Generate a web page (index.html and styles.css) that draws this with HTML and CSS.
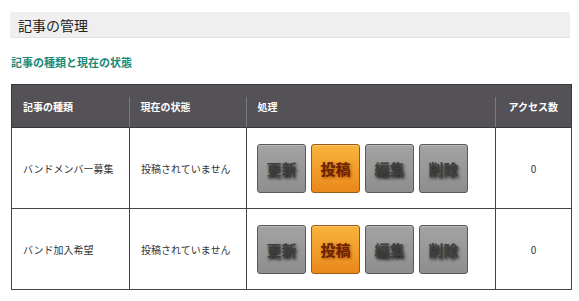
FILE: index.html
```html
<!DOCTYPE html>
<html lang="ja">
<head>
<meta charset="utf-8">
<link rel="stylesheet" href="styles.css">
</head>
<body>
<div class="page">
  <h1 class="title">記事の管理</h1>
  <h2 class="subtitle">記事の種類と現在の状態</h2>
  <table class="posts">
    <colgroup>
      <col class="c1"><col class="c2"><col class="c3"><col class="c4">
    </colgroup>
    <thead>
      <tr>
        <th>記事の種類</th>
        <th><span class="div"></span>現在の状態</th>
        <th><span class="div"></span>処理</th>
        <th class="center"><span class="div"></span>アクセス数</th>
      </tr>
    </thead>
    <tbody>
      <tr>
        <td>バンドメンバー募集</td>
        <td>投稿されていません</td>
        <td>
          <div class="actions">
            <button class="btn">更新</button>
            <button class="btn orange">投稿</button>
            <button class="btn">編集</button>
            <button class="btn">削除</button>
          </div>
        </td>
        <td class="center">0</td>
      </tr>
      <tr>
        <td>バンド加入希望</td>
        <td>投稿されていません</td>
        <td>
          <div class="actions">
            <button class="btn">更新</button>
            <button class="btn orange">投稿</button>
            <button class="btn">編集</button>
            <button class="btn">削除</button>
          </div>
        </td>
        <td class="center">0</td>
      </tr>
    </tbody>
  </table>
</div>
</body>
</html>
```
FILE: styles.css
```css
html, body {
  margin: 0;
  padding: 0;
  background: #ffffff;
}
body {
  font-family: "Noto Sans CJK JP", "Noto Sans", sans-serif;
  color: #333;
}
.page {
  padding: 12px 8px 0 10px;
}
.title {
  margin: 0;
  width: 560px;
  height: 26px;
  box-sizing: border-box;
  background: #efefef;
  border-bottom: 1px solid #e2e2e2;
  border-radius: 2px 0 0 2px;
  font-size: 14px;
  font-weight: normal;
  line-height: 26px;
  padding-left: 8px;
  color: #222;
}
.subtitle {
  margin: 16px 0 0 1px;
  font-size: 11px;
  font-weight: bold;
  line-height: 16px;
  color: #178a78;
}
.posts {
  margin: 14px 0 0 1px;
  width: 560px;
  border-collapse: collapse;
  table-layout: fixed;
  font-size: 10px;
}
.c1 { width: 118px; }
.c2 { width: 117px; }
.c3 { width: 249px; }
.c4 { width: 76px; }
.posts th {
  position: relative;
  height: 42px;
  background: #545257;
  color: #fff;
  font-weight: bold;
  text-align: left;
  padding: 0 0 0 11px;
  border-top: 1px solid #38373b;
  border-bottom: 1px solid #38373b;
}
.posts th:last-child {
  border-right: 1px solid #38373b;
}
.posts th:first-child {
  border-left: 1px solid #38373b;
}
.div {
  position: absolute;
  left: -1px;
  top: 12px;
  bottom: 0;
  width: 1px;
  background: #7a797d;
}
.posts th.center, .posts td.center {
  text-align: center;
  padding-left: 0;
}
.posts td {
  height: 80px;
  padding: 0 0 0 11px;
  border: 1px solid #444;
  color: #333;
}
.posts td:nth-child(3) {
  padding-left: 10px;
}
.actions {
  display: flex;
  gap: 5px;
}
.btn {
  width: 49px;
  height: 49px;
  box-sizing: border-box;
  padding: 0;
  border: 1px solid #595959;
  border-radius: 3px;
  background: linear-gradient(#a3a3a3, #8e8e8e);
  font-family: "Noto Sans CJK JP", sans-serif;
  font-size: 15px;
  font-weight: bold;
  color: #3e3e3e;
  text-shadow: 1px 2px 3px #111;
  box-shadow: inset 0 1px 0 rgba(255,255,255,0.25);
}
.btn.orange {
  background: linear-gradient(#f8b43c, #ea881c);
  border-color: #9a5a1a;
  color: #6a2200;
  text-shadow: 1px 1px 3px #a04000;
}
```
